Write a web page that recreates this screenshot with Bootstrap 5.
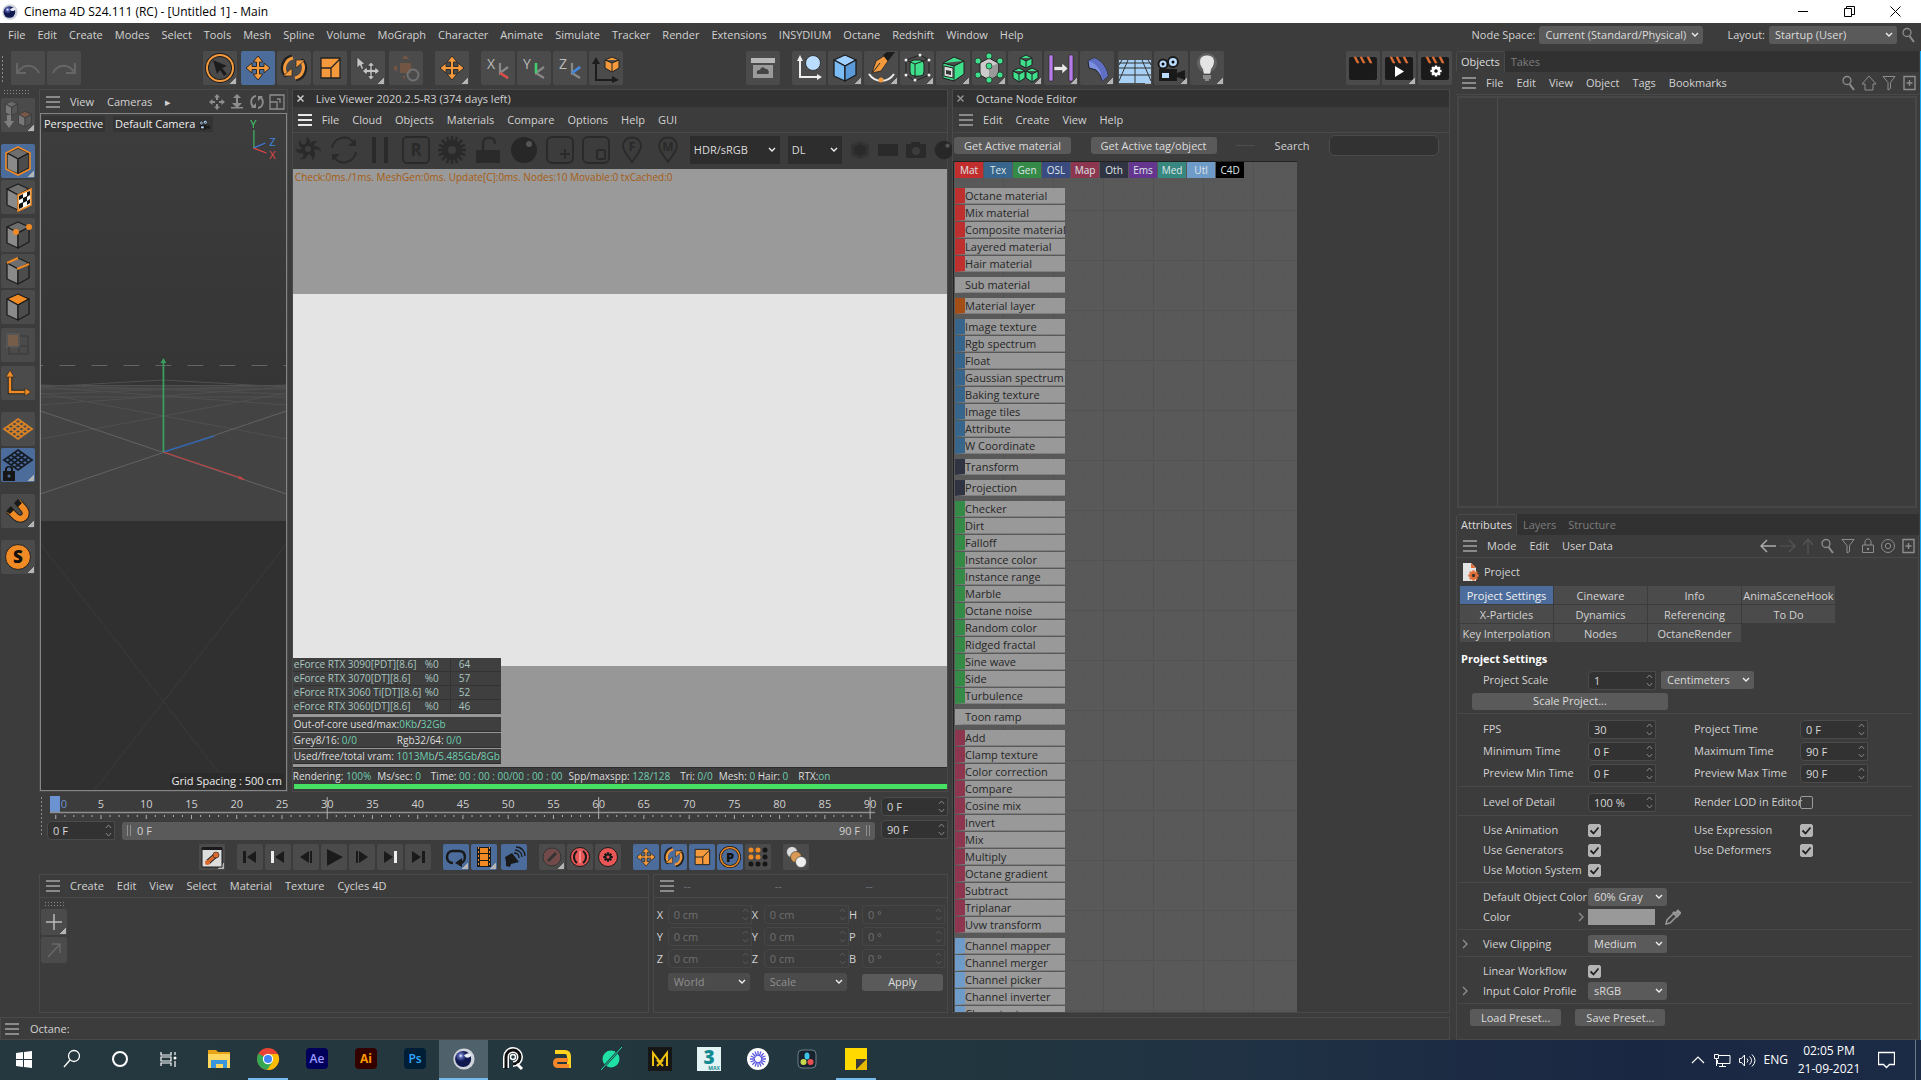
<!DOCTYPE html>
<html lang="en">
<head>
<meta charset="utf-8">
<meta name="viewport" content="width=device-width, initial-scale=1">
<title>Cinema 4D S24.111 (RC) - [Untitled 1] - Main</title>
<link rel="stylesheet" href="https://cdn.jsdelivr.net/npm/bootstrap@5.3.0/dist/css/bootstrap.min.css">
<style>
:root{--bg:#3c3c3c;--edge:#494949;--dark:#313131;--field:#323232;--btn:#4b4b4b;--raise:#5a5a5a;--blue:#4c6d9b;--or:#f08a24;--txt:#d2d2d2;--t:#6e6e6e;--l:#8a8a8a;--r:#4c4c4c;--k:#1c1c1c}
body{font-family:"Open Sans","Noto Sans",sans-serif;font-size:11px;line-height:16px;color:var(--txt);background:var(--bg);min-height:100vh;overflow:hidden}
button,input,select{font-family:inherit;font-size:11px;line-height:16px;color:inherit}
a{color:inherit;text-decoration:none;white-space:nowrap}
svg{display:block;flex:none}
.titlebar{height:23px;background:#fff;color:#000;font-size:12px;padding:0 3px 0 2px}
.titlebar span{padding-left:6px}
.wbtn{border:0;background:none;color:#000;width:46px;height:23px;padding:0;display:flex;align-items:center;justify-content:center}
.mainmenu{height:23px;padding:0 4px 0 8px;margin-bottom:5px}
.menus{gap:12px}
.workarea{flex:1 1 auto;min-height:0}
.leftside{flex:1 1 0;min-width:0}
.rightside{flex:0 0 463px}
.tb{width:34px;height:34px;padding:0;border:0;border-radius:2px;background:var(--btn);color:#ccc;display:flex;align-items:center;justify-content:center;flex:none}
.tb svg{width:34px;height:34px}
.tb.s26{width:26px;height:26px}
.tb.s26 svg{width:26px;height:26px}
.tb.act{background-color:var(--blue)}
.tb.tri{background-image:linear-gradient(135deg,transparent 50%,#b4b4b4 50%);background-size:6px 6px;background-position:right 1px bottom 1px;background-repeat:no-repeat}
.tb.off svg{opacity:.4}
.g2{gap:2px}.g12{gap:12px}
.toolbar-main{height:34px;padding:0 4px 0 1px;margin-bottom:4px}
.grip{background-image:radial-gradient(circle,#8a8a8a 0 1px,transparent 1px);background-size:3px 4px;flex:none}
.leftbar{width:39px;flex:none;padding:0 0 0 1px}
.leftbar .grip{width:26px;height:6px;margin:0 0 3px 2px;background-size:3px 3px}
.pane{border:1px solid var(--edge);min-width:0;min-height:0}
.pane-title{height:17px;background:var(--dark);padding:0 6px 0 4px;gap:12px}
.burger{width:14px;height:12px;padding:0;border:0;flex:none;background:repeating-linear-gradient(#8a8a8a 0 2px,transparent 2px 5px)}
.burger.lit{background:repeating-linear-gradient(#e8e8e8 0 2px,transparent 2px 5px)}
.pane-menu{height:23px;padding:0 2px 0 6px;gap:10px;flex:none}
.pane-menu .menus{gap:13px}
.lv .pane-menu,.nodes .pane-menu{height:25px}
.lv .pane-menu{padding-left:5px}
.ruled{border-bottom:1px solid var(--edge)}
.centre{flex:911 1 0;min-width:0}
.nodes{flex:497 1 0;margin:0 6px 0 4px}
.vp{flex:249 1 0}
.lv{flex:660 1 0}
.mats{flex:613 1 0}
.coords{flex:296 1 0}
.scene{border:1px solid #858585;flex:1 1 auto;min-height:0;position:relative;background:#303030}
.scene>svg{position:absolute;inset:0;width:100%;height:100%}
.hud{position:absolute;color:#ededed;background:#343434;border-radius:2px;padding:0 2px;display:flex;gap:3px;align-items:center;white-space:nowrap}
.hud-view{left:1px;top:2px}.hud-cam{left:72px;top:2px}.hud-grid{right:2px;bottom:1px;background:#2b2b2b}
.lvbar{height:37px;padding:0 5px 3px 1px;gap:8px;border-top:1px solid var(--edge);flex:none}
.lvbar button{border:0;background:none;padding:0;color:#2a2a2a;width:28px;height:28px;flex:none}
.lvbar button.nar{width:20px}
.lvbar svg{width:100%;height:28px}
.drop{appearance:none;border:0;border-radius:3px;height:18px;padding:0 16px 0 6px;color:#dcdcdc;background:var(--raise) url("data:image/svg+xml,%3Csvg xmlns='http://www.w3.org/2000/svg' viewBox='0 0 8 8'%3E%3Cpath d='M1 2l3 3 3-3' fill='none' stroke='%23eee' stroke-width='1.4'/%3E%3C/svg%3E") no-repeat right 4px center/8px 8px}
.lvbar .drop{background-color:#2d2d2d;height:28px;border-radius:0;padding-left:4px}
.wide-a{width:164px}.wide-b{width:128px}.wide-c{width:90px}.wide-d{width:54px}
.picture{flex:1 1 auto;min-height:0;background:linear-gradient(#9a9a9a 0 20.9%,#e4e4e4 20.9% 83.1%,#979797 83.1%)}
.picture .log{color:#a65c12;padding:0 2px;font-size:10px}
.gpu{width:208px;color:#a9c6c0;font-size:10px;border-collapse:collapse;background:linear-gradient(90deg,transparent 103px,#333 103px 104px,transparent 104px 157px,#333 157px 158px,transparent 158px),#3f3f3f}
.gpu td{height:14px;line-height:13px;padding:0 0 0 1px;border:0;border-bottom:1px solid #333;white-space:nowrap}
.gpu td:first-child{width:131px}
.gpu td:nth-child(2){width:34px}
.memrow{width:208px;height:15px;line-height:14px;background:#3f3f3f;border-bottom:1px solid #2c2c2c;margin-bottom:1px;padding:0 1px;color:#dedede;white-space:nowrap;font-size:10px}
.memrow.first{margin-top:3px}
.memrow.last{margin-bottom:3px}
.teal{color:#6fcdb0}
.lvstat{height:17px;gap:6px;font-size:10px;color:#dedede;white-space:nowrap;flex:none;border-top:1px solid #2c2c2c}
.prog{height:5px;background:#46e162;margin:0 0 2px 1px;border-radius:0;flex:none}
.push{border:0;border-radius:3px;background:var(--raise);height:17px;line-height:16px;padding:0 11px;color:#dcdcdc;white-space:nowrap}
.fieldbox{border:1px solid #4b4b4b;border-radius:4px 0 0 4px;background:var(--field);height:19px;display:flex;align-items:center;padding:0 2px 0 5px;min-width:0}
.fieldbox input{flex:1 1 0;width:0;min-width:0;border:0;background:none;padding:0;height:17px;color:#d8d8d8}
.fieldbox svg{width:7px;height:15px;color:#8a8a8a}
.nodehead{height:29px;padding:0 10px 3px 1px;flex:none;border-top:1px solid var(--edge)}
.nodehead .push{padding:0 10px}
.nodehead input{width:110px;height:21px;border:1px solid #4b4b4b;background:#323232}
.dashline{width:19px;border-top:1px solid #4d4d4d}
.nodecanvas{width:344px;flex:1 1 0;min-height:0;overflow:hidden;border-left:1px solid #222;border-top:1px solid #222;background-color:#595959;background-image:linear-gradient(90deg,#525252 1px,transparent 1px),linear-gradient(#525252 1px,transparent 1px),linear-gradient(90deg,#575757 1px,transparent 1px),linear-gradient(#575757 1px,transparent 1px);background-size:50px 50px,50px 50px,10px 10px,10px 10px;background-position:49px 48px}
.ntabs{gap:1px;padding-left:1px;margin-bottom:10px}
.ntabs button{width:28px;height:16px;line-height:15px;border:0;padding:0;font-size:10px;color:#dfe6ea}
.nlist{display:flow-root;list-style:none;margin:0 0 4px 1px;padding:0;width:110px}
.nlist li{height:16px;margin-bottom:1px;line-height:15px;background:#999;border-left:10px solid var(--c);border-bottom:1px solid #7e7e7e;color:#262626;white-space:nowrap}
.timeline{padding:4px 0 0 1px;height:52px;flex:none;gap:6px}
.timeline>.grip{width:4px;height:40px}
.ruler{height:23px;width:100%;overflow:visible}
.ruler text{fill:#cfcfcf;font-size:11px;text-anchor:middle}
.rangerow{gap:7px;padding-top:2px;margin-left:-3px}
.rangerow .fieldbox{width:68px}
.endcol{width:67px;padding-top:1px}
.range{height:18px;border-radius:3px;background:var(--raise);flex:1 1 auto;padding:0 5px;gap:6px}
.bar2{width:4px;height:11px;border:solid #8f8f8f;border-width:0 1px}
.transport{height:30px;padding-left:20px}
.lower{height:139px}
.mats>.grip{width:20px;height:6px;margin:3px 0 2px 4px;background-size:3px 3px}
.matbtns{padding-left:1px}
.dashcol{flex:0 0 91px}
.coordgrid{display:grid;grid-template-columns:11px 85fr 12px 86fr 13px 84fr;row-gap:3px;padding:7px 2px 0 3px;align-items:center}
.coordgrid .fieldbox{background:none;border-color:#464646}
.coordgrid .fieldbox input{color:#6f6f6f}
.coordgrid .fieldbox svg{color:#5a5a5a}
.coordgrid .drop,.coordgrid .push{width:calc(100% - 2px);margin-top:2px}
.coordgrid .drop{background-color:#4b4b4b;color:#8f8f8f}
.statusline{height:23px;border:1px solid var(--edge);padding:0 4px;gap:11px;margin:4px 6px 0 0;flex:none}
.tabstrip{background:var(--dark);height:21px;flex:none}
.tabstrip button{border:0;background:none;color:#7d7d7d;padding:0 6px;height:21px}
.tabstrip button.on{background:var(--bg);color:#dcdcdc;border:1px solid var(--edge);border-bottom:0;border-radius:2px 2px 0 0;padding:0 4px}
.icons{color:#8d8d8d;gap:4px}
.icons svg{width:16px;height:16px}
.outliner{flex:411 1 0;min-height:0;border:2px solid #474747;margin:1px 2px 6px 1px}
.outliner>div{width:39px;border-right:1px solid #4d4d4d;height:100%}
.attrs{flex:none;border:1px solid var(--edge);border-top:0}
.objline{height:28px;padding-left:5px}
.atabs{display:grid;grid-template-columns:repeat(4,93px);gap:1px;padding-left:3px;margin-bottom:9px}
.atabs button{border:0;background:var(--btn);height:18px;line-height:17px;padding:0;white-space:nowrap}
.atabs button.on{background:var(--blue);color:#f0f0f0}
.secthead{padding-left:4px}
.sect{display:grid;grid-template-columns:105px 106px 106px 68px;grid-auto-rows:22px;align-items:center;padding:4px 0 2px 25px;margin:0 6px 0 1px;border-bottom:1px solid #484848;position:relative}
.sect.low{grid-auto-rows:20px}
.sect.scale{padding-top:2px;grid-template-rows:22px 20px}
.scale .drop{width:93px;margin-left:-33px}
.scale .push{width:196px;margin-left:-11px}
.sect label{white-space:nowrap}
.sect .fieldbox{width:68px}
.sect .drop{width:79px}
.sect.scale .drop{width:93px}
.tick{appearance:none;width:13px;height:13px;margin:0;border-radius:2px;border:1px solid #9a9a9a;background:none}
.tick:checked{border-color:#b4b4b4;background:#b4b4b4 url("data:image/svg+xml,%3Csvg xmlns='http://www.w3.org/2000/svg' viewBox='0 0 11 11'%3E%3Cpath d='M1.500 5.500l3 3 5-6' fill='none' stroke='%23222' stroke-width='1.800'/%3E%3C/svg%3E") center/11px 11px}
.twist{position:absolute;left:4px;top:9px}
.twist.second{top:29px}
.swatchrow{gap:9px}
.swatch{width:67px;height:16px;background:#999;flex:none}
.presets{gap:14px;padding:5px 0 13px 13px}
.winedge{width:2px;background:linear-gradient(90deg,#3c3c3c 50%,#18a0e8 50%)}
.taskbar{height:40px;flex:none;background:linear-gradient(90deg,#25383f,#22363f 50%,#1f3144 66%,#1a2743 85%,#1b2a45);color:#fff;font-size:12px}
.app{width:49px;height:40px;border:0;background:none;padding:0;display:flex;align-items:center;justify-content:center;border-bottom:2px solid transparent;flex:none;border-radius:0}
.app:first-child{width:47px}
.app svg{width:26px;height:26px}
.app.run{background:linear-gradient(#76b9ed,#76b9ed) center bottom/40px 2px no-repeat border-box}
.app.cur{background:#4f626b;border-bottom-color:#76b9ed}
.tray{gap:8px}
.clock{width:66px;line-height:18px}
.peek{width:1px;height:40px;background:#6b7889;margin:0 5px 0 12px}
</style>
<script src="https://cdn.jsdelivr.net/npm/bootstrap@5.3.0/dist/js/bootstrap.bundle.min.js"></script>
</head>
<body class="d-flex flex-column vh-100">
<svg width="0" height="0" class="position-absolute" aria-hidden="true">
<defs><radialGradient id="gball" cx=".35" cy=".3"><stop offset="0" stop-color="#fff"/><stop offset=".25" stop-color="#5a68b8"/><stop offset=".7" stop-color="#10184f"/></radialGradient></defs>
<symbol id="cube" viewBox="0 0 34 34"><g stroke="var(--k)" stroke-width="1.300" stroke-linejoin="round"><path fill="var(--t)" d="M17 4l11 5-11 6L6 9z"/><path fill="var(--l)" d="M6 9l11 6v15L6 25z"/><path fill="var(--r)" d="M17 15l11-6v15l-11 6z"/></g></symbol>
<symbol id="undo" viewBox="0 0 34 34"><path d="M6 12v10h9M7 21c5-8 16-9 21 1" fill="none" stroke="#666" stroke-width="2"/></symbol>
<symbol id="redo" viewBox="0 0 34 34"><path d="M28 12v10h-9M27 21c-5-8-16-9-21 1" fill="none" stroke="#666" stroke-width="2"/></symbol>
<symbol id="sel" viewBox="0 0 34 34"><circle cx="17" cy="17" r="13" fill="none" stroke="#1c1c1c" stroke-width="4"/><circle cx="17" cy="17" r="13" fill="none" stroke="#f59a3c" stroke-width="2"/><path fill="#1c1c1c" d="M10 9l14 6-5 2 5 6-3 2-4-6-3 4z"/></symbol>
<symbol id="move" viewBox="0 0 34 34"><path fill="#f59a3c" stroke="#2a2a2a" d="M17 5l5 6h-3.500v4.500H23V12l6 5-6 5v-3.500h-4.500V23H22l-5 6-5-6h3.500v-4.500H11V22l-6-5 6-5v3.500h4.500V11H12z"/></symbol>
<symbol id="rot" viewBox="0 0 34 34"><path d="M15 6a11 11 0 0 0-5 19M19 28a11 11 0 0 0 5-19" fill="none" stroke="#222" stroke-width="5"/><path d="M16 7a10.500 10.500 0 0 0-6 17M18 27a10.500 10.500 0 0 0 6-17" fill="none" stroke="#f59a3c" stroke-width="3"/><path fill="#f59a3c" stroke="#222" stroke-width=".7" d="M6 25h9v-8zM28 9h-9v8z"/></symbol>
<symbol id="scl" viewBox="0 0 34 34"><path fill="#f59a3c" stroke="#222" stroke-width="1.300" d="M8 7h19v20H8zM8 17h10v10M18 17l9-9"/></symbol>
<symbol id="selmove" viewBox="0 0 34 34"><path fill="#c4c4c4" stroke="#2a2a2a" stroke-width=".6" d="M6 6l8 7-3 .5 1.500 4-2 1-1.500-4-3 2.500zM20 11l3.500 4H21v3.500h3V16l4.500 4-4.500 4v-2.500h-3V25h2.500L20 29l-3.500-4H19v-3.500h-3V24l-4.500-4 4.500-4v2.500h3V15h-2.500z"/></symbol>
<symbol id="place" viewBox="0 0 34 34"><path fill="#b0643c" d="M11 12h11v10H11zM13 8l3-4 4 4zM8 14l-4 3 4 4zM13 25l3 4v-4z"/><circle cx="24" cy="24" r="5.500" fill="none" stroke="#aaa" stroke-width="2"/></symbol>
<symbol id="axis" viewBox="0 0 34 34"><path d="M19 12v10l8-6M19 22l8 5" stroke="#888" stroke-width="2.200" fill="none"/></symbol>
<symbol id="coord" viewBox="0 0 34 34"><path d="M7 12v17h18" fill="none" stroke="#1c1c1c" stroke-width="2"/><path fill="#1c1c1c" d="M3 13l4-7 4 7zM23 25l7 4-7 3z"/><path fill="#f59a3c" stroke="#222" d="M16 9l7-3 7 3v8l-7 4-7-4zM16 9l7 3 7-3M23 12v9"/></symbol>
<symbol id="box" viewBox="0 0 34 34"><path fill="#b8b8b8" d="M5 7h24v5H5z"/><path fill="#9a9a9a" d="M7 14h20v13H7z"/><path fill="#444" d="M11 23c-1-4 2-4 3-4 1-4 5-3 5-1 3-1 5 4 3 5z"/></symbol>
<symbol id="nul" viewBox="0 0 34 34"><path d="M8 8v18h19" fill="none" stroke="#eee" stroke-width="2"/><path fill="#eee" d="M5 10l3-6 3 6zM25 23l5 3-5 3z"/><circle cx="21" cy="12" r="7.500" fill="#b9dcff" stroke="#333"/></symbol>
<symbol id="pen" viewBox="0 0 34 34"><path fill="#f59a3c" stroke="#222" stroke-width=".8" d="M8 22l4-12 8-5 4 5-7 10z"/><path d="M19 4l4-3h8l-7 9z" fill="#1c1c1c"/><path d="M9 21l7-9" stroke="#222" fill="none"/><path d="M5 23c6 9 19 9 25 0" fill="none" stroke="#eee" stroke-width="2"/><circle cx="17" cy="29" r="2.500" fill="#f59a3c"/></symbol>
<symbol id="sds" viewBox="0 0 34 34"><rect x="10" y="9" width="14" height="16" rx="4" fill="#3fe08c" stroke="#222"/><path d="M6 9l14-5 9 5v15l-14 6-9-6zM6 9l9 4 14-5M15 13v17" fill="none" stroke="#222"/><g fill="#eee"><circle cx="6" cy="9" r="1.500"/><circle cx="29" cy="9" r="1.500"/><circle cx="20" cy="4" r="1.500"/><circle cx="15" cy="29" r="1.500"/><circle cx="29" cy="24" r="1.500"/><circle cx="6" cy="24" r="1.500"/></g></symbol>
<symbol id="gen" viewBox="0 0 34 34"><path fill="#3fe08c" stroke="#1e1e1e" d="M7 12l11-6 10 4v13l-10 7-11-3zM7 12l11 3 10-5M18 15v15"/><path fill="#ddd" stroke="#222" d="M8 15l9 2v10l-9-2z"/><path fill="#333" d="M10 19l5 1v4l-5-1z"/></symbol>
<symbol id="vol" viewBox="0 0 34 34"><path fill="#ccc" stroke="#222" d="M8 12l9-5 9 5v12l-9 5-9-5z"/><path fill="#999" d="M17 17l9-5v12l-9 5z"/><g fill="#3fe08c" stroke="#222" stroke-width=".7"><circle cx="17" cy="5" r="3"/><circle cx="6" cy="10" r="3"/><circle cx="28" cy="10" r="3"/><circle cx="17" cy="15" r="3"/><circle cx="6" cy="24" r="3"/><circle cx="28" cy="24" r="3"/><circle cx="17" cy="29" r="3"/></g></symbol>
<symbol id="mog" viewBox="0 0 34 34"><g fill="#3fe08c" stroke="#1e1e1e"><path d="M12 7l6-3 6 3v7l-6 3-6-3zM12 7l6 3 6-3M18 10v7"/><path d="M5 20l6-3 6 3v7l-6 4-6-4zM5 20l6 3 6-3M11 23v8"/><path d="M18 20l6-3 6 3v7l-6 4-6-4zM18 20l6 3 6-3M24 23v8"/></g></symbol>
<symbol id="fld" viewBox="0 0 34 34"><path fill="#b57be8" stroke="#222" stroke-width=".6" d="M5 4h4v26H5zM25 4h4v26h-4z"/><path fill="#e8e8e8" stroke="#222" stroke-width=".5" d="M10 15.500h8V12l6 5.500-6 5.500v-3.500h-8z"/></symbol>
<symbol id="bend" viewBox="0 0 34 34"><path fill="#7d8fe0" stroke="#222" d="M8 10l6-3c7 2 13 10 14 18l-6 5c-1-5-3-8-6-11l-7-2z"/><path fill="#5f70c4" d="M14 7c7 2 13 10 14 18l-6 5c0-10-5-18-14-20z"/></symbol>
<symbol id="floor" viewBox="0 0 34 34"><path fill="#a8d0f5" d="M1 9h32v23H1z"/><path d="M1 12h32M1 17h32M1 24h32M17 9v23M10 9L1 30M24 9l9 21M4 9l-3 5M30 9l3 5" stroke="#333" fill="none"/></symbol>
<symbol id="cam" viewBox="0 0 34 34"><path fill="#1a1a1a" d="M5 18h18v12H5zM23 22l8-3v10l-8-3z"/><circle cx="9" cy="13" r="4.500" fill="#b9dcff" stroke="#1a1a1a" stroke-width="2"/><circle cx="19" cy="11" r="5" fill="#b9dcff" stroke="#1a1a1a" stroke-width="2"/><circle cx="9" cy="13" r="1.500"/><circle cx="19" cy="11" r="1.500"/><rect x="8" y="22" width="7" height="5" fill="#b9dcff"/></symbol>
<symbol id="bulb" viewBox="0 0 34 34"><circle cx="17" cy="12" r="10" fill="#636363"/><path fill="#e4e4e4" stroke="#333" stroke-width=".6" d="M17 4c9 0 9 9 4.500 14l-1 5h-7l-1-5C8 13 8 4 17 4z"/><path d="M13 25h8M13 27h8M15 29h4" stroke="#ccc"/></symbol>
<symbol id="clap" viewBox="0 0 34 34"><rect x="3" y="6" width="28" height="23" rx="2" fill="#1a1a1a"/><path d="M8 6l3 6h2l-3-6zM14 6l3 6h2l-3-6zM21 6l3 6h2l-3-6z" fill="#e07038" stroke="#e07038" stroke-width=".6"/></symbol>
<symbol id="gear" viewBox="0 0 20 20"><path d="M10 2v16M2 10h16M4.400 4.400l11.200 11.200M15.600 4.400L4.400 15.600" stroke="currentColor" stroke-width="3.500"/><circle cx="10" cy="10" r="6" fill="currentColor"/><circle cx="10" cy="10" r="2.600" fill="var(--h,#1a1a1a)"/></symbol>
<symbol id="mesh" viewBox="0 0 34 34"><path d="M17 7l14 10-14 10L3 17zM13.500 9.500l14 10M10 12l14 10M6.500 14.500l14 10M20.500 9.500l-14 10M24 12L10 22M27.500 14.500l-14 10" fill="none" stroke="currentColor" stroke-width="1.800"/></symbol>
<symbol id="search" viewBox="0 0 16 16"><circle cx="6" cy="5.500" r="4" fill="none" stroke="currentColor" stroke-width="1.300"/><path d="M8.500 9l4.500 6" stroke="currentColor" stroke-width="2"/></symbol>
<symbol id="home" viewBox="0 0 16 16"><path d="M8 1l7 8h-3v6H4V9H1z" fill="none" stroke="currentColor"/></symbol>
<symbol id="funnel" viewBox="0 0 16 16"><path d="M2 1.500h12l-4.500 6v6L7 15V7.500z" fill="none" stroke="currentColor"/></symbol>
<symbol id="plusbox" viewBox="0 0 16 16"><path d="M3 1.500h11v13H3zM8.500 5v6M5.500 8h6" fill="none" stroke="currentColor" stroke-width="1.400"/></symbol>
<symbol id="lock" viewBox="0 0 16 16"><path d="M2.500 7h11v7.500h-11zM5 7V4c0-4 6-4 6 0v3" fill="none" stroke="currentColor"/><circle cx="8" cy="11" r="1.200" fill="currentColor"/></symbol>
<symbol id="target" viewBox="0 0 16 16"><circle cx="8" cy="8" r="6.500" fill="none" stroke="currentColor"/><circle cx="8" cy="8" r="2.700" fill="none" stroke="currentColor"/></symbol>
<symbol id="spin" viewBox="0 0 7 15"><path d="M.8 5l2.700-3 2.700 3M.8 10l2.700 3 2.700-3" fill="none" stroke="currentColor"/></symbol>
<symbol id="chev" viewBox="0 0 6 10"><path d="M1 1l4 4-4 4" fill="none" stroke="#8d8d8d" stroke-width="1.400"/></symbol>
<symbol id="pin" viewBox="0 0 28 28"><path d="M14 1.500c6 0 9 4 9 8.500 0 5-5 10-9 16C10 20 5 15 5 10c0-4.500 3-8.500 9-8.500z" fill="none" stroke="currentColor" stroke-width="1.800"/></symbol>
<symbol id="ball" viewBox="0 0 28 28"><circle cx="14" cy="14" r="13" fill="#272727"/><circle cx="19" cy="8" r="3" fill="#555"/></symbol>
<symbol id="c4d" viewBox="0 0 26 26"><circle cx="13" cy="13" r="12.500" fill="#cfd4da"/><circle cx="12" cy="13" r="9.500" fill="url(#gball)"/><path d="M13 9c4-4 8-3 9-1-1 3-5 4-7 3z" fill="#e8ecf2"/></symbol>
</svg>

<header class="titlebar d-flex align-items-center flex-shrink-0">
  <svg width="16" height="16"><use href="#c4d"/></svg><span class="me-auto">Cinema 4D S24.111 (RC) - [Untitled 1] - Main</span>
  <button class="wbtn" aria-label="Minimize"><svg width="11" height="11"><path d="M0 5.500h10" stroke="#000"/></svg></button>
  <button class="wbtn" aria-label="Restore"><svg width="11" height="11"><path d="M.5 2.500h7v8h-7zM2.500 2.500v-2h8v8h-3" fill="none" stroke="#000"/></svg></button>
  <button class="wbtn" aria-label="Close"><svg width="11" height="11"><path d="M.5.5l10 10M10.500.5l-10 10" stroke="#000"/></svg></button>
</header>
<nav class="mainmenu d-flex align-items-center flex-shrink-0">
  <div class="menus d-flex me-auto"><a href="#">File</a><a href="#">Edit</a><a href="#">Create</a><a href="#">Modes</a><a href="#">Select</a><a href="#">Tools</a><a href="#">Mesh</a><a href="#">Spline</a><a href="#">Volume</a><a href="#">MoGraph</a><a href="#">Character</a><a href="#">Animate</a><a href="#">Simulate</a><a href="#">Tracker</a><a href="#">Render</a><a href="#">Extensions</a><a href="#">INSYDIUM</a><a href="#">Octane</a><a href="#">Redshift</a><a href="#">Window</a><a href="#">Help</a></div>
  <label for="nspace" class="me-1">Node Space:</label>
  <select id="nspace" class="drop wide-a"><option>Current (Standard/Physical)</option></select>
  <label for="lay" class="ms-4 me-1">Layout:</label>
  <select id="lay" class="drop wide-b me-1"><option>Startup (User)</option></select>
  <svg class="icons" width="16" height="16"><use href="#search"/></svg>
</nav>

<div class="workarea d-flex">
<div class="leftside d-flex flex-column">
  <div class="toolbar-main d-flex justify-content-between flex-shrink-0">
    <div class="d-flex g2"><span class="grip me-1 mt-1" style="width:4px;height:28px"></span>
      <button class="tb" aria-label="Undo"><svg><use href="#undo"/></svg></button><button class="tb" aria-label="Redo"><svg><use href="#redo"/></svg></button></div>
    <div class="d-flex g12">
      <div class="d-flex gap-1"><button class="tb tri" aria-label="Select"><svg><use href="#sel"/></svg></button>
        <div class="d-flex g2"><button class="tb act" aria-label="Move"><svg><use href="#move"/></svg></button><button class="tb" aria-label="Rotate"><svg><use href="#rot"/></svg></button><button class="tb" aria-label="Scale"><svg><use href="#scl"/></svg></button></div>
        <button class="tb tri" aria-label="Last tool"><svg><use href="#selmove"/></svg></button><button class="tb off" aria-label="Place"><svg><use href="#place"/></svg></button></div>
      <button class="tb tri" aria-label="Move tool"><svg><use href="#move"/></svg></button>
      <div class="d-flex g2">
        <button class="tb" aria-label="X axis"><svg viewBox="0 0 34 34"><use href="#axis"/><path d="M19 22l8 5" stroke="#e04848" stroke-width="2.500"/><text x="6" y="18" font-size="14" fill="#bbb">X</text></svg></button>
        <button class="tb" aria-label="Y axis"><svg viewBox="0 0 34 34"><use href="#axis"/><path d="M19 12v10" stroke="#3fce6c" stroke-width="2.500"/><text x="6" y="18" font-size="14" fill="#bbb">Y</text></svg></button>
        <button class="tb" aria-label="Z axis"><svg viewBox="0 0 34 34"><use href="#axis"/><path d="M19 22l8-6" stroke="#3f86e0" stroke-width="2.500"/><text x="6" y="18" font-size="14" fill="#bbb">Z</text></svg></button>
        <button class="tb" aria-label="Coordinate system"><svg><use href="#coord"/></svg></button></div>
    </div>
    <div class="d-flex g12">
      <button class="tb" aria-label="Asset browser"><svg><use href="#box"/></svg></button>
      <div class="d-flex gap-1"><div class="d-flex g2">
        <button class="tb" aria-label="Null"><svg><use href="#nul"/></svg></button>
        <button class="tb tri" aria-label="Cube"><svg style="--t:#9fd0ff;--l:#7cbcf5;--r:#5a9ad8"><use href="#cube"/></svg></button>
        <button class="tb tri" aria-label="Pen"><svg><use href="#pen"/></svg></button><button class="tb tri" aria-label="Subdivision"><svg><use href="#sds"/></svg></button><button class="tb tri" aria-label="Generator"><svg><use href="#gen"/></svg></button><button class="tb tri" aria-label="Volume"><svg><use href="#vol"/></svg></button><button class="tb tri" aria-label="Cloner"><svg><use href="#mog"/></svg></button><button class="tb tri" aria-label="Field"><svg><use href="#fld"/></svg></button><button class="tb tri" aria-label="Deformer"><svg><use href="#bend"/></svg></button></div>
        <div class="d-flex g2"><button class="tb tri" aria-label="Floor"><svg><use href="#floor"/></svg></button><button class="tb tri" aria-label="Camera"><svg><use href="#cam"/></svg></button><button class="tb tri" aria-label="Light"><svg><use href="#bulb"/></svg></button></div></div>
    </div>
    <div class="d-flex g2"><button class="tb" aria-label="Render view"><svg><use href="#clap"/></svg></button>
      <button class="tb tri" aria-label="Render"><svg viewBox="0 0 34 34"><use href="#clap"/><path d="M13 15l9 5.500-9 5.500z" fill="#fff"/></svg></button>
      <button class="tb" aria-label="Render settings"><svg viewBox="0 0 34 34" style="color:#fff"><use href="#clap"/><use href="#gear" x="11" y="13" width="14" height="14"/></svg></button></div>
  </div>

  <div class="d-flex flex-grow-1" style="min-height:0">
    <aside class="leftbar d-flex flex-column">
      <span class="grip"></span>
      <div class="d-flex flex-column g12">
        <button class="tb tri off" aria-label="Make editable"><svg viewBox="0 0 34 34" style="--t:#999;--l:#bbb;--r:#666"><use href="#cube" x="1" y="1" width="19" height="19"/><path d="M6 17h4v6h3l-5 7-5-7h3z" fill="#ccc"/><use href="#cube" x="14" y="11" width="20" height="20" style="--t:#b86a44"/></svg></button>
        <div class="d-flex flex-column gap-1">
          <div class="d-flex flex-column g2">
            <button class="tb act tri" aria-label="Model mode"><svg viewBox="0 0 34 34"><use href="#cube"/><path d="M17 3l12 6v16l-12 6-12-6V9z" fill="none" stroke="#f08a24" stroke-width="1.600"/></svg></button>
            <button class="tb" aria-label="Texture mode"><svg viewBox="0 0 34 34"><use href="#cube"/><path d="M17 15l13-6v16l-13 6z" fill="#fff" stroke="#f08a24" stroke-width="1.500"/><path d="M18 16l4-2v4l-4 2zM26 12l3-1v4l-3 2zM22 18l4-2v5l-4 2zM18 24l4-2v5l-4 2zM26 21l3-2v4l-3 2z" fill="#111"/></svg></button></div>
          <div class="d-flex flex-column g2">
            <button class="tb" aria-label="Points mode"><svg viewBox="0 0 34 34"><use href="#cube"/><circle cx="15" cy="14" r="3" fill="#f08a24"/><circle cx="28" cy="9" r="3" fill="#f08a24"/></svg></button>
            <button class="tb" aria-label="Edges mode"><svg viewBox="0 0 34 34"><use href="#cube"/><path d="M6 9l11-5M16 15l12-5" stroke="#f08a24" stroke-width="2"/></svg></button>
            <button class="tb" aria-label="Polygons mode"><svg style="--t:#f08a24"><use href="#cube"/></svg></button></div>
          <button class="tb off" aria-label="UV mode"><svg viewBox="0 0 34 34"><path d="M6 6h12v13H6z" fill="#b87848" stroke="#666" stroke-width="2"/><path d="M19 8h8v18H8v-7M18 19v7M19 18h8" fill="none" stroke="#333" stroke-width="2"/></svg></button>
          <button class="tb" aria-label="Axis mode"><svg viewBox="0 0 34 34"><path d="M9 9v17h17" fill="none" stroke="#222" stroke-width="4.500"/><path d="M9 9v17h17" fill="none" stroke="#f08a24" stroke-width="2.500"/><path d="M5 11l4-7 4 7zM24 22l6 4-6 4z" fill="#f08a24" stroke="#222" stroke-width=".6"/></svg></button>
        </div>
        <div class="d-flex flex-column g2"><button class="tb" aria-label="Workplane"><svg style="color:#d98226"><use href="#mesh"/></svg></button>
          <button class="tb act tri" aria-label="Lock workplane"><svg viewBox="0 0 34 34" style="color:#161c26"><use href="#mesh" y="-5" width="34" height="34"/><path d="M2 23h12v10H2zM4 23v-2c0-4 8-4 8 0v2h-2v-2c0-2-4-2-4 0v2z" fill="#161616"/><circle cx="8" cy="28" r="1.500" fill="#4c6d9b"/></svg></button></div>
        <button class="tb tri" aria-label="Snap"><svg viewBox="0 0 34 34"><path d="M8 16l7 7c6 5 13-2 8-8l-6-7" fill="none" stroke="#222" stroke-width="8"/><path d="M8 16l7 7c6 5 13-2 8-8l-6-7" fill="none" stroke="#f08a24" stroke-width="6"/><path d="M5 17l5-5 3 4-4 4zM13 9l4-4 4 4-4 4z" fill="#1a1a1a"/></svg></button>
        <button class="tb tri" aria-label="Solo"><svg viewBox="0 0 34 34"><circle cx="17" cy="17" r="12.500" fill="#f08a24" stroke="#222"/><text x="17" y="23" text-anchor="middle" font-size="17" font-weight="800" fill="#111">S</text></svg></button>
      </div>
    </aside>

    <div class="centre d-flex flex-column">
      <div class="d-flex gap-1 flex-grow-1" style="min-height:0">
        <section class="pane vp d-flex flex-column">
          <div class="pane-menu d-flex align-items-center">
            <button class="burger" aria-label="Menu"></button><div class="menus d-flex me-auto"><a href="#">View</a><a href="#">Cameras</a><a href="#">▸</a></div>
            <div class="icons d-flex">
              <svg viewBox="0 0 16 16"><path fill="#8d8d8d" d="M8 0l3 3.500H9V6H7V3.500H5zM8 16l3-3.500H9V10H7v2.500H5zM0 8l3.500-3v2H6v2H3.500v2zM16 8l-3.500-3v2H10v2h2.500v2z"/></svg>
              <svg viewBox="0 0 16 16"><path fill="#8d8d8d" d="M8 0l4 4H9v5h4l-5 5-5-5h4V4H4zM2 13h12v1.500H2z"/></svg>
              <svg viewBox="0 0 16 16"><path fill="none" stroke="#8d8d8d" stroke-width="1.800" d="M7 2C1 3 1 11 5 13M9 14c6-1 6-9 2-11"/><path fill="#8d8d8d" d="M2 14h5V9zM14 2H9v5z"/></svg>
              <svg viewBox="0 0 16 16"><path fill="none" stroke="#8d8d8d" stroke-width="1.300" d="M1 1h14v14H1zM1 8h7v7M8 5h3v4"/></svg></div>
          </div>
          <div class="scene">
            <svg viewBox="0 0 246 676" preserveAspectRatio="xMidYMid slice">
              <defs><linearGradient id="sky" x2="0" y2="1"><stop stop-color="#3d3d3d"/><stop offset="1" stop-color="#353535"/></linearGradient></defs>
              <rect width="246" height="271" fill="url(#sky)"/><rect y="271" width="246" height="136" fill="#434343"/>
              <path d="M-13 251.500h260" stroke="#646464" stroke-dasharray="16 16"/>
              <path d="M0 271.500h246M0 273l123-7 123 7M0 275h246M0 280l246-9M0 271l246 9M0 291l246-18M0 273l246 18M0 325l246-46M0 279l246 46M0 283h246" stroke="#505050" fill="none"/>
              <path d="M0 297l246 83M0 380l246-83" stroke="#636363"/>
              <path d="M0 430l192 246M246 430L54 676" stroke="#3b3b3b"/>
              <path d="M123 338l51-16" stroke="#3465ae" stroke-width="1.500"/><path d="M123 338l78 26" stroke="#bb4545" stroke-width="1.300"/><path d="M205 366l-6-4-1 3z" fill="#c44"/>
              <path d="M123 338v-91" stroke="#3a9c5d" stroke-width="1.800"/><path d="M123 244l3 5h-6z" fill="#3a9c5d"/>
              <path d="M213.500 16v18" stroke="#3fce6c"/><path d="M213 34l12-5" stroke="#3f78d8" stroke-width="1.300"/><path d="M213 34l13 5" stroke="#e04848" stroke-width="1.300"/>
              <g font-size="11" text-anchor="middle"><text x="213" y="14" fill="#3fce6c">Y</text><text x="232" y="32" fill="#3f86e0">Z</text><text x="232" y="45" fill="#e04848">X</text></g>
            </svg>
            <span class="hud hud-view">Perspective</span><span class="hud hud-cam">Default Camera<svg width="13" height="13"><use href="#cam"/></svg></span><span class="hud hud-grid">Grid Spacing : 500 cm</span>
          </div>
        </section>

        <section class="pane lv d-flex flex-column">
          <div class="pane-title d-flex align-items-center"><svg width="7" height="7"><path d="M.5.5l6 6M6.500.5l-6 6" stroke="#ccc" stroke-width="1.500"/></svg><span>Live Viewer 2020.2.5-R3 (374 days left)</span></div>
          <div class="pane-menu d-flex align-items-center"><button class="burger lit" aria-label="Menu"></button><div class="menus d-flex"><a href="#">File</a><a href="#">Cloud</a><a href="#">Objects</a><a href="#">Materials</a><a href="#">Compare</a><a href="#">Options</a><a href="#">Help</a><a href="#">GUI</a></div></div>
          <div class="lvbar d-flex align-items-center">
            <button aria-label="Send scene"><svg viewBox="0 0 28 28"><path fill="currentColor" d="M12 1c3 1 5 4 4 7 2-3 5-4 8-2-3 0-4 2-4 4 4 0 7 2 7 6-2-3-5-3-7-1 2 3 1 7-2 9 1-3-1-5-4-6-1 4-4 6-8 5 3-1 4-4 3-6-4 1-7-1-8-5 2 2 5 2 7 0C4 10 4 6 7 4c-1 3 1 5 4 4 2-2 2-5 1-7z"/><circle cx="14" cy="13" r="3" fill="#3c3c3c"/></svg></button>
            <button aria-label="Restart"><svg viewBox="0 0 28 28"><path d="M2 12C4 0 20-2 24 8M26 16C24 28 8 30 4 20" fill="none" stroke="currentColor" stroke-width="2"/><path d="M26 3v7h-8zM2 25v-7h8z" fill="currentColor"/></svg></button>
            <button aria-label="Pause"><svg viewBox="0 0 28 28"><path fill="currentColor" d="M6 1h4v26H6zM18 1h4v26h-4z"/></svg></button>
            <button aria-label="Region R"><svg viewBox="0 0 28 28"><rect x="1" y="1" width="26" height="26" rx="4" fill="none" stroke="currentColor" stroke-width="1.800"/><text x="14" y="20" font-size="17" font-weight="700" text-anchor="middle" fill="currentColor">R</text></svg></button>
            <button aria-label="Settings"><svg viewBox="0 0 28 28"><path d="M14 0v28M0 14h28M4 4l20 20M24 4L4 24M9 1l10 26M19 1L9 27M1 9l26 10M1 19L27 9" stroke="currentColor" stroke-width="2.500"/><circle cx="14" cy="14" r="10" fill="currentColor"/><circle cx="14" cy="14" r="4" fill="#3c3c3c"/></svg></button>
            <button aria-label="Lock"><svg viewBox="0 0 28 28"><path d="M2 14h24v13H2z" fill="currentColor"/><path d="M9 14V7c0-7 12-7 12 0v1" fill="none" stroke="currentColor" stroke-width="2.500"/></svg></button>
            <button aria-label="Clay"><svg><use href="#ball"/></svg></button>
            <button aria-label="Add region"><svg viewBox="0 0 28 28"><rect x="1" y="1" width="26" height="26" rx="5" fill="none" stroke="currentColor" stroke-width="2"/><path d="M19 13v10M14 18h10" stroke="currentColor" stroke-width="2"/></svg></button>
            <button aria-label="Film region"><svg viewBox="0 0 28 28"><rect x="1" y="1" width="26" height="26" rx="5" fill="none" stroke="currentColor" stroke-width="2"/><rect x="15" y="14" width="8" height="9" rx="1" fill="none" stroke="currentColor" stroke-width="2"/></svg></button>
            <button aria-label="Focus picker"><svg viewBox="0 0 28 28"><use href="#pin"/><text x="14" y="15" font-size="13" font-weight="700" text-anchor="middle" fill="currentColor">F</text></svg></button>
            <button aria-label="Material picker"><svg viewBox="0 0 28 28"><use href="#pin"/><text x="14" y="15" font-size="12" font-weight="700" text-anchor="middle" fill="currentColor">M</text></svg></button>
            <select class="drop wide-c flex-shrink-0" aria-label="Colour space"><option>HDR/sRGB</option></select>
            <select class="drop wide-d flex-shrink-0" aria-label="Kernel"><option>DL</option></select>
            <button class="nar" aria-label="Hexagon"><svg viewBox="0 0 20 28"><path d="M10 5l9 4v10l-9 4-9-4V9z" fill="#333"/><path d="M10 8l6 3v6l-6 3-6-3v-6z" fill="currentColor"/></svg></button>
            <button class="nar" aria-label="Rectangle"><svg viewBox="0 0 20 28"><path d="M0 8h20v12H0z" fill="currentColor"/></svg></button>
            <button class="nar" aria-label="Snapshot"><svg viewBox="0 0 20 28"><path d="M0 8h5V6h9v2h6v14H0z" fill="currentColor"/><circle cx="10" cy="15" r="4" fill="#3c3c3c"/></svg></button>
            <button class="nar" aria-label="Sphere"><svg viewBox="4 0 20 28"><use href="#ball" x="4" y="4" width="20" height="20"/></svg></button>
          </div>
          <div class="picture d-flex flex-column">
            <div class="log">Check:0ms./1ms. MeshGen:0ms. Update[C]:0ms. Nodes:10 Movable:0 txCached:0</div>
            <table class="gpu mt-auto"><tbody>
              <tr><td>eForce RTX 3090[PDT][8.6]</td><td>%0</td><td>64</td></tr>
              <tr><td>eForce RTX 3070[DT][8.6]</td><td>%0</td><td>57</td></tr>
              <tr><td>eForce RTX 3060 Ti[DT][8.6]</td><td>%0</td><td>52</td></tr>
              <tr><td>eForce RTX 3060[DT][8.6]</td><td>%0</td><td>46</td></tr></tbody></table>
            <div class="memrow first">Out-of-core used/max:<span class="teal">0Kb</span>/<span class="teal">32Gb</span></div>
            <div class="memrow d-flex"><span class="w-50">Grey8/16: <span class="teal">0/0</span></span><span>Rgb32/64: <span class="teal">0/0</span></span></div>
            <div class="memrow last">Used/free/total vram: <span class="teal">1013Mb</span>/<span class="teal">5.485Gb</span>/<span class="teal">8Gb</span></div>
          </div>
          <div class="lvstat d-flex align-items-center"><span>Rendering: <span class="teal">100%</span></span><span class="me-1">Ms/sec: <span class="teal">0</span></span><span>Time: <span class="teal">00 : 00 : 00/00 : 00 : 00</span></span><span>Spp/maxspp: <span class="teal">128/128</span></span><span class="ms-1">Tri: <span class="teal">0/0</span></span><span>Mesh: <span class="teal">0</span> Hair: <span class="teal">0</span></span><span class="ms-1">RTX:<span class="teal">on</span></span></div>
          <div class="progress prog" role="progressbar" aria-label="Rendering"></div>
        </section>
      </div>

      <div class="timeline d-flex">
        <span class="grip"></span>
        <div class="flex-grow-1 d-flex flex-column">
          <svg class="ruler" id="ruler"></svg>
          <div class="rangerow d-flex align-items-center"><div class="fieldbox"><input value="0 F" aria-label="Start frame"><svg><use href="#spin"/></svg></div>
            <div class="range d-flex align-items-center"><i class="bar2"></i><span class="me-auto">0 F</span><span>90 F</span><i class="bar2"></i></div></div>
        </div>
        <div class="endcol d-flex flex-column gap-1"><div class="fieldbox"><input value="0 F" aria-label="Current frame"><svg><use href="#spin"/></svg></div><div class="fieldbox"><input value="90 F" aria-label="End frame"><svg><use href="#spin"/></svg></div></div>
      </div>

      <div class="transport d-flex justify-content-center g12 flex-shrink-0">
        <button class="tb s26 tri" aria-label="Record key"><svg viewBox="0 0 26 26"><path d="M3 4h20v19H3z" fill="#ddd" stroke="#1a1a1a"/><path d="M3 3h20v3H3z" fill="#1a1a1a"/><path d="M9 18l8-7" stroke="#222" stroke-width="5"/><path d="M9 18l8-7" stroke="#d9692c" stroke-width="3"/><circle cx="17" cy="11" r="3" fill="#d9692c" stroke="#222" stroke-width=".6"/><circle cx="8.500" cy="18.500" r="2.500" fill="#d9692c"/></svg></button>
        <div class="d-flex g2">
          <button class="tb s26" aria-label="First frame"><svg viewBox="0 0 26 26"><path d="M6 7h3v12H6zM19 7v12l-9-6z" fill="#1a1a1a"/></svg></button>
          <button class="tb s26" aria-label="Previous key"><svg viewBox="0 0 26 26"><path d="M6 7h3v12H6z" fill="#eee"/><path d="M19 7v12l-9-6z" fill="#1a1a1a"/></svg></button>
          <button class="tb s26" aria-label="Previous frame"><svg viewBox="0 0 26 26"><path d="M16 7v12l-9-6zM17 7h2v12h-2z" fill="#1a1a1a"/></svg></button>
          <button class="tb s26" aria-label="Play"><svg viewBox="0 0 26 26"><path d="M6 5l16 8-16 9z" fill="#1a1a1a"/></svg></button>
          <button class="tb s26" aria-label="Next frame"><svg viewBox="0 0 26 26"><path d="M10 7v12l9-6zM7 7h2v12H7z" fill="#1a1a1a"/></svg></button>
          <button class="tb s26" aria-label="Next key"><svg viewBox="0 0 26 26"><path d="M17 7h3v12h-3z" fill="#eee"/><path d="M7 7v12l9-6z" fill="#1a1a1a"/></svg></button>
          <button class="tb s26" aria-label="Last frame"><svg viewBox="0 0 26 26"><path d="M17 7h3v12h-3zM7 7v12l9-6z" fill="#1a1a1a"/></svg></button></div>
        <div class="d-flex gap-1"><div class="d-flex g2">
          <button class="tb s26 act tri" aria-label="Loop"><svg viewBox="0 0 26 26"><path d="M10 19c-8 0-8-12 0-12h6c8 0 7 11 2 12" fill="none" stroke="#1a1a1a" stroke-width="2.500"/><path d="M19 14v9l-7-4z" fill="#1a1a1a"/></svg></button>
          <button class="tb s26 act tri" aria-label="All frames"><svg viewBox="0 0 26 26"><path d="M6 3h14v20H6z" fill="#1a1a1a"/><path d="M9 4h8v5H9zM9 10h8v6H9zM9 17h8v5H9z" fill="#f08a24"/><path d="M7.500 3v20M18.500 3v20" stroke="#f08a24" stroke-dasharray="2 2"/></svg></button></div>
          <button class="tb s26 act" aria-label="Sound"><svg viewBox="0 0 26 26"><path d="M4 13l7-4 7 9-8 2-1 3-4-1v-4z" fill="#1a1a1a"/><path d="M13 9c3 0 5 2 5 5M14 6c5 0 7 4 7 7M15 3c6 0 9 5 9 9" fill="none" stroke="#1a1a1a" stroke-width="1.300"/></svg></button></div>
        <div class="d-flex g2">
          <button class="tb s26 tri off" aria-label="Record"><svg viewBox="0 0 26 26"><circle cx="13" cy="13" r="9" fill="#b04a4a" stroke="#111"/><path d="M9 17l8-8" stroke="#111" stroke-width="3"/></svg></button>
          <button class="tb s26" aria-label="Autokey"><svg viewBox="0 0 26 26"><circle cx="13" cy="13" r="9.500" fill="#e85656" stroke="#1a1a1a"/><path d="M10 7c-4 3-4 9 0 12M16 7c4 3 4 9 0 12" stroke="#1a1a1a" stroke-width="2" fill="none"/><path d="M13 7v12" stroke="#fbb"/></svg></button>
          <button class="tb s26" aria-label="Key options"><svg viewBox="0 0 26 26" style="color:#1a1a1a;--h:#e85656"><circle cx="13" cy="13" r="9.500" fill="#e85656" stroke="#1a1a1a"/><use href="#gear" x="7" y="7" width="12" height="12"/></svg></button></div>
        <div class="d-flex g2">
          <button class="tb s26 act" aria-label="Key position"><svg><use href="#move"/></svg></button><button class="tb s26 act" aria-label="Key rotation"><svg><use href="#rot"/></svg></button><button class="tb s26 act" aria-label="Key scale"><svg><use href="#scl"/></svg></button>
          <button class="tb s26 act" aria-label="Key parameter"><svg viewBox="0 0 26 26"><circle cx="13" cy="13" r="9.500" fill="none" stroke="#1a1a1a" stroke-width="3"/><circle cx="13" cy="13" r="9.500" fill="none" stroke="#f08a24" stroke-width="1.500"/><text x="13" y="18" font-size="13" font-weight="800" text-anchor="middle" fill="#111">P</text></svg></button>
          <button class="tb s26" aria-label="Key PLA"><svg viewBox="0 0 26 26"><g fill="#f08a24"><circle cx="6" cy="6" r="2.500"/><circle cx="13" cy="6" r="2.500"/><circle cx="6" cy="13" r="2.500"/><circle cx="13" cy="13" r="2.500"/></g><g fill="#161616"><circle cx="20" cy="6" r="2.500"/><circle cx="20" cy="13" r="2.500"/><circle cx="6" cy="20" r="2.500"/><circle cx="13" cy="20" r="2.500"/><circle cx="20" cy="20" r="2.500"/></g></svg></button></div>
        <button class="tb s26" aria-label="Ghost"><svg viewBox="0 0 26 26"><g stroke="#333" stroke-width=".6"><circle cx="9" cy="8" r="5.500" fill="#ddd"/><circle cx="13" cy="13" r="5.500" fill="#d99a55"/><circle cx="18" cy="18" r="5.500" fill="#eee"/></g></svg></button>
      </div>

      <div class="lower d-flex gap-1 flex-shrink-0">
        <section class="pane mats">
          <div class="pane-menu ruled d-flex align-items-center"><button class="burger" aria-label="Menu"></button><div class="menus d-flex"><a href="#">Create</a><a href="#">Edit</a><a href="#">View</a><a href="#">Select</a><a href="#">Material</a><a href="#">Texture</a><a href="#">Cycles 4D</a></div></div>
          <div class="grip"></div>
          <div class="matbtns d-flex flex-column g2"><button class="tb s26 tri" aria-label="New material"><svg viewBox="0 0 26 26"><path d="M13 5v16M5 13h16" stroke="#bbb" stroke-width="1.500"/></svg></button><button class="tb s26" aria-label="Pick material"><svg viewBox="0 0 26 26"><path d="M7 20L19 7M11 7h8v9" stroke="#6a6a6a" fill="none" stroke-width="1.300"/></svg></button></div>
        </section>
        <section class="pane coords">
          <div class="pane-menu ruled d-flex align-items-center"><button class="burger" aria-label="Menu"></button><div class="d-flex flex-grow-1 text-secondary"><span class="dashcol">--</span><span class="dashcol">--</span><span>--</span></div></div>
          <div class="coordgrid" id="coordgrid"></div>
        </section>
      </div>
    </div>

    <section class="pane nodes d-flex flex-column">
      <div class="pane-title d-flex align-items-center"><svg width="7" height="7"><path d="M.5.5l6 6M6.500.5l-6 6" stroke="#999" stroke-width="1.300"/></svg><span>Octane Node Editor</span></div>
      <div class="pane-menu d-flex align-items-center"><button class="burger" aria-label="Menu"></button><div class="menus d-flex"><a href="#">Edit</a><a href="#">Create</a><a href="#">View</a><a href="#">Help</a></div></div>
      <div class="nodehead d-flex align-items-center justify-content-between"><button class="push">Get Active material</button><button class="push">Get Active tag/object</button><span class="dashline"></span><label for="nsearch">Search</label><input id="nsearch" class="rounded"></div>
      <div class="nodecanvas">
        <div class="ntabs d-flex"><button style="background:#c22e2e">Mat</button><button style="background:#38658b">Tex</button><button style="background:#368a48">Gen</button><button style="background:#3a4b80">OSL</button><button style="background:#8c3650">Map</button><button style="background:#303342">Oth</button><button style="background:#64368f">Ems</button><button style="background:#38887f">Med</button><button style="background:#6f9bc9">Utl</button><button style="background:#000">C4D</button></div>
        <div id="nodelist"></div>
      </div>
    </section>
  </div>
  <div class="statusline d-flex align-items-center"><button class="burger" aria-label="Menu"></button><span>Octane:</span></div>
</div>

<aside class="rightside d-flex flex-column">
  <div class="tabstrip d-flex"><button class="on">Objects</button><button>Takes</button></div>
  <div class="pane-menu ruled d-flex align-items-center"><button class="burger" aria-label="Menu"></button><div class="menus d-flex me-auto"><a href="#">File</a><a href="#">Edit</a><a href="#">View</a><a href="#">Object</a><a href="#">Tags</a><a href="#">Bookmarks</a></div><div class="icons d-flex"><svg><use href="#search"/></svg><svg><use href="#home"/></svg><svg><use href="#funnel"/></svg><svg><use href="#plusbox"/></svg></div></div>
  <div class="outliner"><div></div></div>
  <div class="tabstrip d-flex"><button class="on">Attributes</button><button>Layers</button><button>Structure</button></div>
  <div class="attrs">
    <div class="pane-menu ruled d-flex align-items-center"><button class="burger" aria-label="Menu"></button><div class="menus d-flex me-auto"><a href="#">Mode</a><a href="#">Edit</a><a href="#">User Data</a></div><div class="icons d-flex">
      <svg viewBox="0 0 16 16"><path d="M16 8H1M7 2L1 8l6 6" fill="none" stroke="#aaa" stroke-width="1.500"/></svg><svg viewBox="0 0 16 16"><path d="M0 8h15M9 2l6 6-6 6" fill="none" stroke="#555" stroke-width="1.200"/></svg><svg viewBox="0 0 16 16"><path d="M8 16V1M3 7l5-6 5 6" fill="none" stroke="#555" stroke-width="1.200"/></svg><svg><use href="#search"/></svg><svg><use href="#funnel"/></svg><svg><use href="#lock"/></svg><svg><use href="#target"/></svg><svg><use href="#plusbox"/></svg></div></div>
    <div class="objline d-flex align-items-center gap-1"><svg width="18" height="20" viewBox="0 0 18 20" style="color:#e07038;--h:#333"><path d="M1 1h8l5 5v13H1z" fill="#e4e4e4"/><path d="M9 1l5 5H9z" fill="#e07038"/><use href="#gear" x="5" y="7" width="13" height="13"/></svg><span>Project</span></div>
    <div class="atabs"><button class="on">Project Settings</button><button>Cineware</button><button>Info</button><button>AnimaSceneHook</button><button>X-Particles</button><button>Dynamics</button><button>Referencing</button><button>To Do</button><button>Key Interpolation</button><button>Nodes</button><button>OctaneRender</button></div>
    <div class="secthead fw-bold text-white">Project Settings</div>
    <div class="sect scale"><label for="ps">Project Scale</label><div class="fieldbox"><input id="ps" value="1"><svg><use href="#spin"/></svg></div><select class="drop" aria-label="Units"><option>Centimeters</option></select><span></span><button class="push">Scale Project...</button></div>
    <div class="sect" id="times"></div>
    <div class="sect"><label for="lod">Level of Detail</label><div class="fieldbox"><input id="lod" value="100 %"><svg><use href="#spin"/></svg></div><label for="rlod">Render LOD in Editor</label><input class="tick" type="checkbox" id="rlod"></div>
    <div class="sect low"><label for="ua">Use Animation</label><input class="tick" type="checkbox" id="ua" checked><label for="ue">Use Expression</label><input class="tick" type="checkbox" id="ue" checked><label for="ug">Use Generators</label><input class="tick" type="checkbox" id="ug" checked><label for="ud">Use Deformers</label><input class="tick" type="checkbox" id="ud" checked><label for="um">Use Motion System</label><input class="tick" type="checkbox" id="um" checked></div>
    <div class="sect low"><label for="doc">Default Object Color</label><select class="drop" id="doc"><option>60% Gray</option></select><span></span><span></span>
      <label for="colr" class="d-flex align-items-center justify-content-between pe-1">Color<svg width="6" height="10"><use href="#chev"/></svg></label><div class="swatchrow d-flex align-items-center"><button id="colr" class="swatch border-0 p-0" aria-label="Color"></button><svg width="17" height="17" viewBox="0 0 17 17"><path d="M2 15l1-4 7-7 3 3-7 7z" fill="none" stroke="#999" stroke-width="1.500"/><path d="M9 3l5 5M11 5l3-3 2 2-3 3z" stroke="#999" stroke-width="2.500"/></svg></div></div>
    <div class="sect low"><svg class="twist" width="6" height="10"><use href="#chev"/></svg><label for="vc">View Clipping</label><select class="drop" id="vc"><option>Medium</option></select></div>
    <div class="sect low"><label for="lw">Linear Workflow</label><input class="tick" type="checkbox" id="lw" checked><span></span><span></span><svg class="twist second" width="6" height="10"><use href="#chev"/></svg><label for="icp">Input Color Profile</label><select class="drop" id="icp"><option>sRGB</option></select></div>
    <div class="presets d-flex"><button class="push">Load Preset...</button><button class="push">Save Preset...</button></div>
  </div>
</aside>
<div class="winedge"></div>
</div>

<footer class="taskbar d-flex align-items-center">
  <button class="app" aria-label="Start"><svg viewBox="0 0 26 26"><path fill="#fff" d="M5 7l7-1v7H5zM13 6l8-1v8h-8zM5 14h7v7l-7-1zM13 14h8v8l-8-1z"/></svg></button>
  <button class="app" aria-label="Search"><svg viewBox="0 0 26 26"><circle cx="15" cy="10" r="5.500" fill="none" stroke="#fff" stroke-width="1.300"/><path d="M11 14l-6 7" stroke="#fff" stroke-width="1.300"/></svg></button>
  <button class="app" aria-label="Cortana"><svg viewBox="0 0 26 26"><circle cx="12" cy="13" r="7" fill="none" stroke="#fff" stroke-width="2"/></svg></button>
  <button class="app" aria-label="Task view"><svg viewBox="0 0 26 26"><path d="M4 6v3h10V6M4 20v-3h10v3M4 11h10v4H4zM18 6v3M18 15v6" fill="none" stroke="#fff" stroke-width="1.200"/><circle cx="18" cy="12" r="1.500" fill="#fff"/></svg></button>
  <button class="app" aria-label="Explorer"><svg viewBox="0 0 26 26"><path d="M2 4h8l2 2h12v16H2z" fill="#e8a317"/><path d="M2 8h22v14H2z" fill="#ffd75e"/><path d="M5 22v-8h16v8h-4v-4h-7v4z" fill="#3a96dd"/></svg></button>
  <button class="app run" aria-label="Chrome"><svg viewBox="0 0 26 26"><circle cx="13" cy="13" r="11" fill="#ea4335"/><path d="M13 13L3.500 7.500A11 11 0 0 0 13 24l5-8z" fill="#34a853"/><path d="M13 8h9.800A11 11 0 0 1 12 24l5.500-8z" fill="#fbbc05"/><circle cx="13" cy="13" r="5.200" fill="#fff"/><circle cx="13" cy="13" r="4" fill="#4285f4"/></svg></button>
  <button class="app" aria-label="After Effects"><svg viewBox="0 0 26 26"><rect x="2" y="2" width="22" height="21" rx="4" fill="#00005b"/><text x="13" y="17" font-size="12" font-weight="600" text-anchor="middle" fill="#9999ff">Ae</text></svg></button>
  <button class="app" aria-label="Illustrator"><svg viewBox="0 0 26 26"><rect x="2" y="2" width="22" height="21" rx="4" fill="#330000"/><text x="13" y="17" font-size="12" font-weight="700" text-anchor="middle" fill="#ff9a00">Ai</text></svg></button>
  <button class="app" aria-label="Photoshop"><svg viewBox="0 0 26 26"><rect x="2" y="2" width="22" height="21" rx="4" fill="#001e36"/><text x="13" y="17" font-size="12" font-weight="600" text-anchor="middle" fill="#31a8ff">Ps</text></svg></button>
  <button class="app cur" aria-label="Cinema 4D"><svg viewBox="0 0 26 26"><use href="#c4d" x="2" y="2" width="22" height="22"/></svg></button>
  <button class="app" aria-label="PureRef"><svg viewBox="0 0 26 26"><path d="M6 22V11a7 7 0 1 1 7 7" fill="none" stroke="#fff" stroke-width="6"/><path d="M6 23V11a7 7 0 1 1 7 7" fill="none" stroke="#111" stroke-width="3"/><circle cx="13" cy="11" r="2.500" fill="none" stroke="#fff" stroke-width="1.500"/><path d="M17 18l5 5" stroke="#fff" stroke-width="3"/></svg></button>
  <button class="app" aria-label="Anima"><svg viewBox="0 0 26 26"><path d="M6 6h10q4 0 4 5v11" fill="none" stroke="#ffd21f" stroke-width="4"/><path d="M20 20H9q-3 0-3-3t3-3h10" fill="none" stroke="#f5862a" stroke-width="4"/></svg></button>
  <button class="app" aria-label="Sketch"><svg viewBox="0 0 26 26"><circle cx="13" cy="13" r="8.500" fill="#1fe0a5"/><path d="M2 25L24 1" stroke="#22363f" stroke-width="2.500"/><path d="M3 24L24 1" stroke="#1fe0a5"/></svg></button>
  <button class="app" aria-label="M"><svg viewBox="0 0 26 26"><rect x="1" y="1" width="24" height="24" fill="#161616"/><path d="M6 20V7l7 9 7-9v13M10 20l6-6M10 14l6 6" fill="none" stroke="#f0c010" stroke-width="2"/></svg></button>
  <button class="app" aria-label="3ds Max"><svg viewBox="0 0 26 26"><rect x="1" y="1" width="24" height="24" fill="#e4f3f4"/><text x="13" y="18" font-size="19" font-weight="800" text-anchor="middle" fill="#138a91">3</text><text x="18" y="24" font-size="5" font-weight="700" text-anchor="middle" fill="#138a91">MAX</text></svg></button>
  <button class="app" aria-label="Sun"><svg viewBox="0 0 26 26"><circle cx="13" cy="13" r="11" fill="#fff"/><path d="M13 5v16M5 13h16M7.300 7.300l11.400 11.400M18.700 7.300L7.300 18.700M10 5.600l6 14.800M16 5.600l-6 14.800M5.600 10l14.800 6M5.600 16l14.800-6" stroke="#5b57e0" stroke-width="1.300"/><circle cx="13" cy="13" r="3" fill="#fff"/></svg></button>
  <button class="app" aria-label="DaVinci Resolve"><svg viewBox="0 0 26 26"><rect x="4" y="4" width="18" height="18" rx="4" fill="#18222e" stroke="#6a8088"/><ellipse cx="13" cy="10" rx="2.500" ry="3.500" fill="#3cc3e8"/><circle cx="9.500" cy="16" r="3" fill="#c8d850"/><circle cx="16.500" cy="16" r="3" fill="#e85050"/></svg></button>
  <button class="app run me-auto" aria-label="Sticky Notes"><svg viewBox="0 0 26 26"><path d="M2 2h22v22H2z" fill="#ffd900"/><path d="M13 13h11L13 24z" fill="#3b3b3b"/><path d="M24 13v11H13z" fill="#e8b800"/></svg></button>
  <div class="tray d-flex align-items-center">
    <svg width="15" height="10"><path d="M1 8l6-6 6 6" fill="none" stroke="#fff" stroke-width="1.200"/></svg>
    <svg width="17" height="15"><path d="M5 2.500h11v8H3.500V7M5 13.500h7M8.500 11v2M.5 1.500h4v4h-4zM2.500 5.500V13" fill="none" stroke="#fff"/></svg>
    <svg width="17" height="15"><path d="M.5 5.500h2l3-3.500v11l-3-3.500h-2zM8 5.500q2 2 0 4M10.500 3.500q4 4 0 8M13 1.500q6 6 0 12" fill="none" stroke="#fff"/></svg>
    <span>ENG</span><div class="clock text-center">02:05 PM<br>21-09-2021</div>
    <svg width="17" height="18" class="mx-2"><path d="M.5 1.500h16v12h-5l-3 3-3-3h-5z" fill="none" stroke="#fff" stroke-width="1.300"/></svg>
  </div>
  <span class="peek"></span>
</footer>

<script>
// Node palette: [colour, entries]
const groups=[['#be2f2f',['Octane material','Mix material','Composite material','Layered material','Hair material']],['#999',['Sub material']],['#a34e16',['Material layer']],['#38658b',['Image texture','Rgb spectrum','Float','Gaussian spectrum','Baking texture','Image tiles','Attribute','W Coordinate']],['#303342',['Transform']],['#303342',['Projection']],['#368a48',['Checker','Dirt','Falloff','Instance color','Instance range','Marble','Octane noise','Random color','Ridged fractal','Sine wave','Side','Turbulence']],['#999',['Toon ramp']],['#8c3650',['Add','Clamp texture','Color correction','Compare','Cosine mix','Invert','Mix','Multiply','Octane gradient','Subtract','Triplanar','Uvw transform']],['#6f9bc9',['Channel mapper','Channel merger','Channel picker','Channel inverter','Chaos texture']]];
document.getElementById('nodelist').innerHTML=groups.map(([c,n])=>`<ul class="nlist" style="--c:${c}">${n.map(t=>`<li>${t}</li>`).join('')}</ul>`).join('');

// Timeline ruler, 0..90 frames spread over the free width
const pos=f=>(0.7+f*98.7/90).toFixed(2)+'%';
let r='<rect width="10" height="16" fill="#6b93d2"/><line x1="0" x2="100%" y1="16.500" y2="16.500" stroke="#8f8f8f" stroke-width="1.500"/>';
for(let f=0;f<=90;f++){r+=`<line x1="${pos(f)}" x2="${pos(f)}" y1="${f%30==0&&f?1:19}" y2="${f%5?21:23}" stroke="#b0b0b0"/>`;if(f&&f%5==0)r+=`<text x="${pos(f)}" y="12">${f}</text>`;}
document.getElementById('ruler').innerHTML=r+'<text x="14" y="12" style="fill:#6b93d2">0</text>';

const field=(id,v,off='')=>`<div class="fieldbox"><input id="${id}" value="${v}"${off}><svg><use href="#spin"/></svg></div>`;
document.getElementById('times').innerHTML=[['FPS','30'],['Project Time','0 F'],['Minimum Time','0 F'],['Maximum Time','90 F'],['Preview Min Time','0 F'],['Preview Max Time','90 F']].map(([l,v],i)=>`<label for="t${i}">${l}</label>${field('t'+i,v)}`).join('');
document.getElementById('coordgrid').innerHTML=[['X','0 cm'],['X','0 cm'],['H','0 °'],['Y','0 cm'],['Y','0 cm'],['P','0 °'],['Z','0 cm'],['Z','0 cm'],['B','0 °']].map(([l,v],i)=>`<label for="c${i}">${l}</label>${field('c'+i,v,' disabled')}`).join('')+'<span></span><select class="drop" aria-label="Space" disabled><option>World</option></select><span></span><select class="drop" aria-label="Size mode" disabled><option>Scale</option></select><span></span><button class="push">Apply</button>';
</script>
</body>
</html>
